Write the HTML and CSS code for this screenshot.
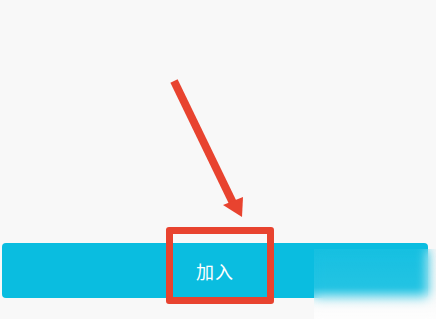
FILE: index.html
```html
<!DOCTYPE html>
<html lang="zh">
<head>
<meta charset="utf-8">
<link rel="stylesheet" href="styles.css">
</head>
<body>
<div class="page">
  <div class="actions">
    <button class="join">加入</button>
  </div>
  <div class="highlight"></div>
  <svg class="arrow" width="436" height="319" viewBox="0 0 436 319">
    <line x1="174" y1="81" x2="233" y2="203" stroke="#e8432f" stroke-width="8" stroke-linecap="butt"/>
    <polygon points="223,205 243,197 242,217" fill="#e8432f"/>
  </svg>
  <div class="watermark"></div>
</div>
</body>
</html>
```
FILE: styles.css
```css
html, body {
  margin: 0;
  padding: 0;
}
body {
  background: #f8f8f8;
  font-family: "Noto Sans CJK SC", "Noto Sans", sans-serif;
}
.page {
  position: relative;
  width: 436px;
  height: 319px;
  overflow: hidden;
  display: flex;
  flex-direction: column;
  justify-content: flex-end;
}
.actions {
  padding: 0 8px 21px 2px;
}
.join {
  display: block;
  width: 100%;
  height: 55px;
  border: none;
  border-radius: 4px;
  background: #0abde0;
  color: #ffffff;
  font-family: "Noto Sans CJK SC", "Noto Sans", sans-serif;
  font-size: 18px;
  padding: 0;
  letter-spacing: 1px;
}
.highlight {
  position: absolute;
  left: 166px;
  top: 227px;
  width: 94px;
  height: 63px;
  border: 7px solid #e8432f;
  border-radius: 3px;
}
.arrow {
  position: absolute;
  left: 0;
  top: 0;
}
.watermark {
  position: absolute;
  left: 314px;
  top: 249px;
  width: 122px;
  height: 70px;
  backdrop-filter: blur(6px);
  background: linear-gradient(to bottom, rgba(255,255,255,0.05) 0%, rgba(255,255,255,0.1) 55%, rgba(255,255,255,0.75) 100%);
}
```
